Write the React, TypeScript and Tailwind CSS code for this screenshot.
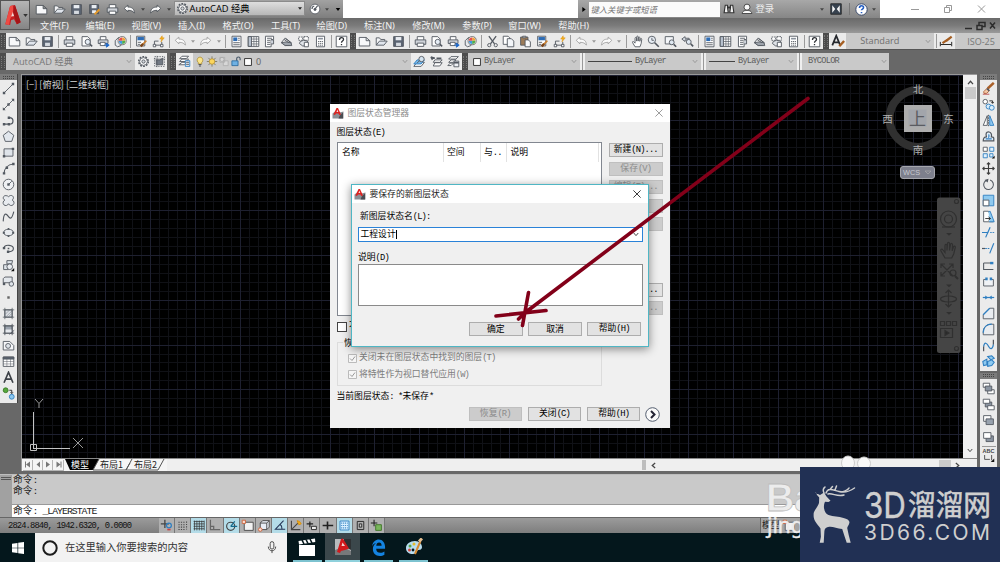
import React from "react";

const D = "#525860";
const B = "#2f7fc1";

const icons: Record<string, React.ReactNode> = {
  new: <path d="M1.500 3h8.500l4.500 4v6.500h-13z M10 3v4h4.500" fill="#f7f8fa" />,
  open: <><path d="M1.500 12.500v-9h4l1.500 2h5v2" fill="#f3f4f6" /><path d="M1.500 12.500l4-5h9.500l-4 5z" fill="#e0e5ec" /></>,
  save: <><path d="M2 2h12v12H2z" fill="#5b6472" /><path d="M4.500 2.500h7v4h-7z" fill="#e9edf2" stroke="none" /><path d="M5 9.500h6v4H5z" fill="#d5dae0" stroke="none" /></>,
  saveas: <><path d="M2 2h11v11H2z" fill="#5b6472" /><path d="M4.500 2.500h6v4h-6z M5 9h5v3.500H5z" fill="#e9edf2" stroke="none" /><path d="M8 14l6-6" stroke="#e39a2e" strokeWidth="2.600" /></>,
  print: <><path d="M4 6V2h8v4" fill="#fff" /><path d="M1.500 6h13v5.500h-13z" fill="#cfd3d9" /><path d="M4 10h8v4H4z" fill="#fff" /></>,
  preview: <><path d="M2.500 2h7l3 3v8.500h-10z" fill="#fff" /><circle cx="9.500" cy="8.500" r="3.200" fill="#e6edf5" /><path d="M12 11l3 3" strokeWidth="1.800" /></>,
  publish: <><path d="M4 6V2h7v4" fill="#fff" /><path d="M1.500 6h12v4.500h-12z" fill="#cfd3d9" /><path d="M4 9h6v4H4z" fill="#fff" /><path d="M9 12.500h3M11.500 10l3.500 2.500-3.500 2.500z" fill="#1b66c9" stroke="#1b66c9" /></>,
  dwf: <><path d="M1.500 7l4-4 3 3v7l-4 1.500-3-2z" fill="#e8ebef" /><circle cx="10" cy="7" r="5" fill="#fff" stroke="#666" /><path d="M10 7V3a4 4 0 0 1 4 4z" fill="#f2a33a" stroke="none" /><path d="M10 7h4a4 4 0 0 1-4 4z" fill="#4fae4b" stroke="none" /><path d="M10 7v4a4 4 0 0 1-4-4z" fill="#3f9ae0" stroke="none" /><path d="M10 7H6a4 4 0 0 1 4-4z" fill="#e35050" stroke="none" /></>,
  match: <><path d="M2 1.500h10v12H2z" fill="#fff" /><path d="M3 2.500h8v4H3z" fill="#2d6cb5" stroke="none" /><path d="M3.500 9h4M3.500 11.500h3" /><path d="M8 13l6-6" stroke="#c98032" strokeWidth="2" /><path d="M7 14l3-3" stroke="#7b4518" strokeWidth="3" /></>,
  bolt: <><path d="M3 7.500v5h9v-4M3 7.500h5" /><path d="M1.500 11.500h3v3h-3z M10.500 11.500h3v3h-3z" fill="#fff" /><path d="M12.500 1L9.500 5h2.500l-1 3.500 4-5h-2.500z" fill="#f6b21b" stroke="#d98e0a" strokeWidth=".6" /></>,
  undo: <path d="M1.500 6.500L6 2.500v2.500c5 0 8 2 8 7.500-1.500-2.500-4-3.500-8-3.500v2z" fill="#fafafa" />,
  redo: <path d="M14.500 6.500L10 2.500v2.500c-5 0-8 2-8 7.500 1.500-2.500 4-3.500 8-3.500v2z" fill="#fafafa" />,
  props: <><path d="M2.500 1.500h11v13h-11z" fill="#fff" /><path d="M4 3h5v4.500H4z" fill="#2d6cb5" stroke="none" /><path d="M10 4h2M10 6.500h2M4 9.500h8M4 12h8" /></>,
  design: <><path d="M1.500 2h13v12h-13z" fill="#fff" /><path d="M1.500 2h4v12h-4z" fill="#b9c3d0" /><path d="M5.500 5h9M5.500 8h9M5.500 11h9M8.500 2v12M11.500 2v12" strokeWidth=".8" /></>,
  palette: <><path d="M3 1.500h10v4H10v9H3z" fill="#fff" /><path d="M5 4h6M5 6.500h4M5 9h4M5 11.500h4" /><path d="M10 6h3v5h-3" fill="#cfd5dd" /></>,
  sheet: <><path d="M2 9l4-5 8 5.500-2 3-6 .5z" fill="#f4f4f4" /><path d="M1.500 9.500l5 3.500h8l-1-3.500-6-1z" fill="#9ea4ac" /><path d="M5 5.500l6 4M7 4l6 5" /></>,
  markup: <><path d="M2 2.500h5v4H2zM8.500 2h5.500v4.500H8.500z" strokeDasharray="2 1" fill="#fff" /><path d="M4 8l4-1.500 5 1v6H7l-4-3z" fill="#dfe3e8" /><path d="M9 9h5v5.500H9z" fill="#fff" /></>,
  calc: <><path d="M3 1.500h10v13H3z" fill="#fff" /><path d="M5 3.500h6v2H5z" fill="#8a929c" stroke="none" /><path d="M5 8h6M5 10.300h6M5 12.500h6" strokeDasharray="1.500 .8" /></>,
  help: <><path d="M1.500 1.500h13v13h-13z" fill="#fff" /><path d="M5.500 6c0-3.500 5-3.500 5-.5 0 2-2.500 2-2.500 4M8 11v1.500" stroke="#2d3035" strokeWidth="1.600" /></>,
  cut: <><path d="M3.500 1.500l7 9.500M12.500 1.500l-7 9.500" strokeWidth="1.600" /><circle cx="4" cy="12.500" r="2" fill="none" /><circle cx="12" cy="12.500" r="2" fill="none" /></>,
  copy: <><path d="M1.500 1.500h6l2 2v8h-8z" fill="#fff" /><path d="M6.500 4.500h5l3 3v7h-8z" fill="#f3f5f8" /></>,
  paste: <><path d="M2 2.500h9v10H2z" fill="#9c7b58" /><path d="M4.500 1.500h4v2h-4z" fill="#ddd" /><path d="M7.500 6h4l2.500 2.500v6H7.500z" fill="#f8f9fb" /></>,
  pan: <path d="M5 14.500L2 9.500c-.8-1.500.7-2 1.500-1L5 10V4c0-1.300 1.600-1.300 1.800 0L7 7.500V2.300c0-1.300 1.800-1.300 1.800 0v5.200l.3-4.200c.2-1.300 1.800-1.100 1.800.2v4.300l.6-2.800c.3-1.200 1.800-1 1.700.3l-.7 5.200-1.500 4z" fill="#fff" />,
  zoomrt: <><circle cx="6" cy="6" r="4.500" fill="#e8eef5" /><path d="M6 3.500v3h2.500" /><path d="M9.500 9.500l5 5" strokeWidth="2" /></>,
  zoomwin: <><path d="M1.500 2h10v9h-10z" fill="#f4f6f9" /><circle cx="9.500" cy="9" r="3" fill="#dfe8f1" /><path d="M12 11.500l3 3" strokeWidth="2" /></>,
  zoomprev: <><path d="M1 5l4-3v2h5v2H5v2z" fill="#dde3ea" /><circle cx="9.500" cy="8.500" r="3" fill="#dfe8f1" /><path d="M12 11l3 3" strokeWidth="2" /></>,
  gear: <><circle cx="8" cy="8" r="5.800" fill="#fafafa" strokeWidth="2" strokeDasharray="2.200 1.400" /><circle cx="8" cy="8" r="4.800" fill="#fafafa" /><circle cx="8" cy="8" r="2" fill="#d5d8dc" /></>,
  wsave: <><path d="M2 2h12v12H2z" strokeDasharray="1.500 1.500" fill="none" /><path d="M4 6h4l4-2v8H4z" fill="#737a84" /><path d="M1 5h14M5 1v14" strokeWidth=".7" /></>,
  layers: <><path d="M5 1.500h8l-3 3H2z M5 5h8l-3 3H2z M5 9h6l-3 3H1z" fill="#fff" /><path d="M9 7h5.500v7H9z" fill="#e3e9f0" stroke={B} /><path d="M10 9h3.500M10 11.500h3.500" /></>,
  layerA: <><path d="M5 9h9l-4 5H1z" fill="#fff" /><path d="M5 6h9l-4 5H1z" fill="#7ab8e8" stroke={B} /><circle cx="10.500" cy="5" r="3.300" fill="#d5e4f0" /><path d="M8 7l-3 3" /></>,
  layerB: <><path d="M6 6h9l-3 3H4z M6 9.500h9l-3 4H4z" fill="#fff" /><path d="M1 2.500l5 1.500M1 2.500L3 6M8 4h6" strokeWidth="1.700" /></>,
  layerC: <><path d="M5 2h9l-3 3H2z M5 6h6l-3 3H2z M4 10h4l-3 3H1z" fill="#fff" /><path d="M8.500 7.500h6v7h-6z" fill="#eef1f5" /><path d="M8.500 9.500h6" strokeWidth="2" /></>,
  bulb: <><path d="M8 1.500a4.500 4.500 0 0 0-2.500 8v2h5v-2a4.500 4.500 0 0 0-2.500-8z" fill="#fbe58a" stroke="#a98c35" /><path d="M6 12.500h4M6.500 14.500h3" stroke="#555" strokeWidth="1.500" /></>,
  sun: <><path d="M8 .5v15M.5 8h15M2.700 2.700l10.600 10.600M13.300 2.700L2.700 13.300" stroke="#6d6a55" /><circle cx="8" cy="8" r="4" fill="#fbd65d" stroke="#b58d2a" /></>,
  freeze: <><path d="M2 2h7v7H2zM7 7h7v7H7z" fill="#d7d7d7" stroke="#aaa" /><circle cx="5" cy="5" r="3" fill="none" stroke="#aaa" /></>,
  lock: <><path d="M9 7V4c0-3.500 5-3.500 5 0v2" fill="none" strokeWidth="1.600" stroke="#456" /><path d="M2 7h9v7H2z" fill="#6fb1e3" stroke="#1f5f95" /></>,
  sq: <path d="M2.500 2.500h11v11h-11z" fill="#fff" stroke="#222" strokeWidth="1.400" />,
  astyle: <><path d="M1.500 13L6 2l4.500 11M3 9.500h6" strokeWidth="2" stroke="#25282d" fill="none" /><path d="M9.500 14l5.500-6" stroke="#a55e22" strokeWidth="2.800" /></>,
  dim: <><path d="M1.500 9v5M14.500 9v5M2 12h12" stroke="#222" fill="none" /><path d="M4 10.500l5-3.500M8 8l6.500-5" stroke="#a55e22" strokeWidth="2.600" /></>,
  line: <><path d="M2.500 13.500l11-11" /><path d="M1 12h3v3H1z M12 1h3v3h-3z" fill={D} stroke="none" /></>,
  xline: <><path d="M1.500 14.500l13-13" /><path d="M1 11.500V15h3.500zM15 4.500V1h-3.500z M6.500 6.500h3v3h-3z" fill={D} stroke="none" /></>,
  pline: <><path d="M2 12.500h7c6 0 6-8 0-8H8" fill="none" strokeWidth="1.500" /><path d="M1 11h3v3H1zM7 3h3v3H7zM7 11h3v3H7z" fill={D} stroke="none" /></>,
  polygon: <path d="M8 1.500l6.500 5L12 14H4L1.500 6.500z" fill="#e2e7ed" />,
  rect: <><path d="M2.500 3.500h11v9h-11z" fill="#dfe4ea" /><path d="M1 11h3v3H1zM12 2h3v3h-3z" fill={D} stroke="none" /></>,
  arc: <><path d="M2.500 14C3 8 7 3 14 2.500" fill="none" strokeWidth="1.400" /><path d="M1 12.500h3v3H1zM12.500 1h3v3h-3zM4.500 5.500h3v3h-3z" fill={D} stroke="none" /></>,
  circle: <><circle cx="8" cy="8" r="6.500" fill="#eef0f3" /><path d="M8 8l4-4" /><path d="M6.500 6.500h3v3h-3z" fill={D} stroke="none" /></>,
  cloud: <path d="M3.500 7.500C0 6 1.500 1.500 5 2c1.500 0 2.500.7 3 1.500C9.500 1 13.500 1.300 14 4c.3 1.800-.6 2.800-1.500 3.500 2.500 1 3 4 1.200 5.800-1.800 1.600-4.600 1-5.700-1.300-1 2.300-4 3-5.700 1.300-1.700-2-1-4.800 1.200-5.800z" fill="#e8ebef" />,
  spline: <path d="M1.500 14C2 3 5 4 7.500 7.500S12 12 14.500 2" fill="none" strokeWidth="1.400" />,
  ellipse: <><ellipse cx="8" cy="8" rx="6" ry="4" fill="#e8ebef" /><path d="M1 7h2.500v2.500H1zM12.500 7H15v2.500h-2.500zM7 2.500h2v2H7zM7 11.500h2v2H7z" fill={D} stroke="none" /></>,
  earc: <><path d="M2.500 7c1-4.500 11.500-3.500 11.500 1 0 3-3 4-6 4" fill="none" strokeWidth="1.400" /><path d="M1 6h3v3H1zM6 10.500h3v3H6zM7 7h2v2H7z" fill={D} stroke="none" /></>,
  insert: <><path d="M6 2h7l-1 4H6zM2 7h6v6H2z" fill="#dfe4ea" /><circle cx="9.500" cy="9.500" r="3.500" fill="#e9ecf0" /><path d="M11 15h4v-4z" fill="#111" stroke="none" /></>,
  block: <><path d="M1.500 4.500l2-2h9v7h-9l-2 0z" fill="#e3e7ec" /><circle cx="11.500" cy="11" r="2.800" fill="#dfe4ea" /><path d="M1 9.500h3v3H1z" fill={D} stroke="none" /></>,
  point: <path d="M6.500 6.500h3v3h-3z" fill="#666" stroke="none" />,
  hatch: <><path d="M3.500 3.500h9v9h-9z" fill="#dcdfe4" /><path d="M1 3.500h14M1 12.500h14M3.500 1v14M12.500 1v14" strokeWidth=".9" /><path d="M4 9l5-5M5 12l7-7M8 12l4-4" strokeWidth=".5" /></>,
  gradient: <><path d="M3.500 3.500h9v9h-9z" fill="#9ba3ae" /><path d="M4 8h8v4H4z" fill="#e6e9ed" stroke="none" /><path d="M1 3.500h14M1 12.500h14M3.500 1v14M12.500 1v14" /><path d="M9 14l6-5" /></>,
  region: <><path d="M1.500 3h8l5 5v5.500h-13z" fill="#f5f6f8" /><circle cx="7.500" cy="8.500" r="3" fill="#dfe4ea" /></>,
  table: <><path d="M1.500 2.500h13v11.500h-13z" fill="#fff" /><path d="M1.500 2.500h13v2.500h-13z" fill="#5b6472" /><path d="M1.500 8h13M1.500 11h13M6 5v9M10.500 5v9" strokeWidth=".6" /></>,
  text: <path d="M2.500 14.500L8 1.500l5.500 13M4.500 10h7" fill="none" stroke="#3d4147" strokeWidth="2" />,
  addsel: <><circle cx="4.500" cy="4" r="3" fill="#57a83c" stroke="#3a7a26" /><circle cx="12" cy="12" r="3" fill="#8cc8f0" stroke={B} /><path d="M9 4h3v4M10.500 6.500L12 8l1.500-1.500" stroke="#222" fill="none" /></>,
  erase: <><path d="M7 8l7.500-7" stroke="#a95f28" strokeWidth="3" /><path d="M2 12l4-4 3 3-3.500 3h-3z" fill="#f3c8a8" stroke="#b0643a" /><path d="M6 8l3 3" strokeWidth="2" /><path d="M1 15h8" stroke="#b44" /></>,
  copy2: <><circle cx="4" cy="4.500" r="2.800" fill="#fff" /><circle cx="8" cy="10.500" r="3" fill="#d8ecfa" stroke={B} /><circle cx="12" cy="12" r="3" fill="#d8ecfa" stroke={B} /><path d="M9 3.500h4v3M11.500 5L13 6.500 14.500 5" fill="none" stroke="#222" /></>,
  mirror: <><path d="M6.500 2v12h-5z" fill="#fff" /><path d="M9.500 2v12h5z" fill="#8fc8f0" stroke={B} /><path d="M8 1v14" strokeDasharray="2 1" /></>,
  offset: <><path d="M1.500 13.500h13v-3c0-1.500-1-2-3-2 1.500-7-6.500-8-6.500-3 0 1.500.5 2 .5 3-3 0-4 1.500-4 5z" fill="#e4eff8" strokeWidth="1.500" /><path d="M4.500 11h7.500M8 9.500c1-1.500.5-4 0-4" fill="none" stroke={B} strokeWidth="1.500" /></>,
  array: <><path d="M1.500 1.500h5v5h-5z" fill="#fff" /><path d="M9.500 1.500h5v5h-5zM1.500 9.500h5v5h-5zM9.500 9.500h4v4h-4z" fill="#e2f1fc" stroke={B} /><path d="M12 15.500h3.500V12z" fill="#111" stroke="none" /></>,
  move: <path d="M8 1v14M1 8h14M6 3l2-2 2 2M6 13l2 2 2-2M3 6L1 8l2 2M13 6l2 2-2 2" stroke="#3d3d3d" strokeWidth="1.400" fill="none" />,
  rotate: <><path d="M5 3a6 6 0 1 0 5-.5" fill="none" strokeWidth="1.300" /><path d="M3 2.500l5-1.500-1 4.500z" fill={D} stroke="none" /></>,
  scale: <><path d="M1.500 1.500h13v13h-13z" fill="#8fcaf0" stroke={B} /><path d="M1.500 7.500h7v7h-7z" fill="#fff" /></>,
  stretch: <><path d="M2 1.500h6l6 13H2z" fill="#fff" /><path d="M8 2l2-.5 5 13h-6" fill="#8fcaf0" stroke={B} /><path d="M4 10.500h6M8 8.500l2.500 2L8 12.500" stroke="#222" /></>,
  trim: <><path d="M0 8h8M10 1.500L4.500 14" stroke={B} strokeWidth="1.500" /><path d="M10 8h6" strokeDasharray="2 1" stroke={B} /></>,
  extend: <><path d="M0 8h4" strokeWidth="1.500" /><path d="M4 8h6" stroke={B} strokeDasharray="2 1" strokeWidth="1.500" /><path d="M14.500 1.500L9.500 14" stroke={B} strokeWidth="1.400" /></>,
  breakpt: <><path d="M2 5v8h12M2 5h11" fill="none" strokeWidth="1.300" /><path d="M10 3.500h4v3h-4z" fill={B} stroke="none" /></>,
  break: <><path d="M2 5.500v8h12v-8M2 5.500h3M11 5.500h3" fill="#f0f2f5" /><path d="M4 3h3v3.500H4zM9.500 3h3v3.500h-3z" fill={B} stroke="none" /></>,
  join: <><path d="M1 8h14" stroke={B} strokeWidth="1.500" /><path d="M4 5.500L7.500 8 4 10.500zM12 5.500L8.500 8l3.500 2.500z" fill={B} stroke="none" /></>,
  chamfer: <><path d="M1.500 14.500h13v-13h-5l-8 8z" fill="#e9ecf0" /><path d="M1.500 9.500l8-8" stroke={B} strokeWidth="1.600" /></>,
  fillet: <><path d="M1.500 14.500h13v-13h-3c-6 0-10 4-10 10z" fill="#e9ecf0" /><path d="M1.500 12C1.500 5 6 1.500 12 1.500" fill="none" stroke={B} strokeWidth="1.600" /></>,
  blend: <><path d="M2 15V9M14 7V1" strokeWidth="1.500" /><path d="M2 9c1-6 4-4 6 0s5 4 6-2" fill="none" stroke={B} strokeWidth="1.500" /></>,
  explode: <path d="M1 8l5-3v7l-4 1zM7 2l5-1 3 3-4 2zM7 8l5-2 3 3-3 4-5 1z" fill="#8fcaf0" stroke={B} strokeWidth="1.300" />,
  front: <><path d="M1.500 1.500h8v5h-8zM7 9.500h8v5H7z" fill="#fff" /><path d="M4 5h8v6H4z" fill="#8b95a2" /></>,
  back: <><path d="M4 5h8v6H4z" fill="#8b95a2" /><path d="M1.500 1.500h8v5h-8zM7 9.500h8v5H7z" fill="#fff" /></>,
  above: <><path d="M2 2h9v7H2z" fill="#fff" /><path d="M5 6h9v7H5z" fill="#98a2ae" /></>,
  under: <><path d="M5 6h9v7H5z" fill="#8b95a2" /><path d="M2 2h9v7H2z" fill="#fff" /></>,
  snap: <><path d="M1 6h10M6 1v10" strokeWidth="1.600" /><circle cx="11" cy="8" r="3" fill="none" stroke={B} strokeWidth="1.500" /><path d="M9 13h4" stroke="#c44" strokeWidth="2" /></>,
  grid9: <path d="M3 4h8M3 7h8M3 10h8M3 13h8M13 3v10" strokeDasharray="1.500 1.500" strokeWidth="1.300" />,
  grid: <path d="M2 3h13M2 6h13M2 9h13M2 12h13M3 2v12M6 2v12M9 2v12M12 2v12M15 2v12" strokeWidth=".9" stroke="#333" />,
  ortho: <path d="M3 1v12h12M3 9h4v4" fill="none" strokeWidth="1.500" stroke="#666" />,
  polar: <><circle cx="7" cy="9" r="5" fill="none" strokeWidth="1.400" /><path d="M7 9h8M7 9l5-6" stroke="#146a8c" strokeWidth="1.500" /></>,
  osnap: <><path d="M4 4h11v10H4z" fill="#f2f2f2" /><path d="M1.500 1.500h4v4h-4z" fill="#f9ded2" stroke="#d0643c" /></>,
  osnap3: <><path d="M4 5l3-3h8v8l-3 3H4z" fill="#e7edf5" /><path d="M4 5h8v8M12 5l3-3" fill="none" /><circle cx="4" cy="13" r="2.200" fill="#f9ded2" stroke="#d0643c" /></>,
  track: <path d="M13 2L3 12.500h12M9 7c2 1 2 3 2 5" fill="none" stroke="#235" strokeWidth="1.300" />,
  ducs: <><path d="M3 2v11h11M3 13l8-8" fill="none" strokeWidth="1.400" /><path d="M10 2l3 1 2 3-3 1z" fill="#f6b21b" stroke="#d98e0a" /></>,
  dyn: <><path d="M2 6h8M6 3v7" stroke="#222" strokeWidth="1.500" /><path d="M8 9h6v4H8z" fill="#eee" stroke="#222" /></>,
  lwt: <path d="M2 8h13M8 3v10" stroke="#222" strokeWidth="2" />,
  tpy: <><path d="M2.500 2.500h11v11h-11z" fill="#d9efff" stroke={B} /><path d="M4 5h8M4 8h8M4 11h8" stroke={B} strokeDasharray="1.200 1.200" strokeWidth="1.500" /></>,
  qp: <><path d="M4 3h8v10H4z" fill="none" stroke="#222" /><path d="M6.500 6h3v4h-3z" fill="#ccc" stroke="#222" /></>,
  sc: <><path d="M1 5h8M5 1v8" stroke="#222" strokeWidth="1.300" /><path d="M7 7h7v7H7z" fill="#78b65b" stroke="#3d7424" /></>,
  pie: <><circle cx="8" cy="8" r="6.500" fill="#fff" /><path d="M8 8l3.500-4.500M4 8a4 4 0 0 1 3-4" strokeWidth="1.600" fill="none" /><circle cx="8" cy="8.500" r="1.500" fill={D} /></>,
  bino: <><path d="M3 3h3v3L7 13H1.500zM10 3h3l1.500 10H9l1-7z" fill="#f1f1f1" stroke="#333" strokeWidth="1.500" /><path d="M6 6h4" stroke="#333" strokeWidth="2.500" /></>,
  user: <><circle cx="8" cy="5.500" r="4" fill="#fafafa" stroke="#333" /><path d="M1.500 14c1-4 4-4 6.500-4s5.500 0 6.500 4z" fill="#fafafa" stroke="#333" /></>,
  exch: <><path d="M1 1h14v14H1z" fill="#37424f" stroke="#222" /><path d="M3 3l4 5-4 5zM13 3L9 8l4 5z" fill="#f5f5f5" stroke="none" /></>,
  qmark: <><circle cx="8" cy="8" r="7" fill="#fff" stroke="#2c3e63" /><path d="M5.500 6c0-3.500 5-3.500 5-.5 0 2-2.500 2-2.500 3.500M8 11v1.500" stroke="#245ec2" strokeWidth="2" fill="none" /></>,
};

const Icon = ({ n, c = "w-[13px] h-[13px]", s = D }: { n: string; c?: string; s?: string }) => (
  <svg viewBox="0 0 16 16" className={`shrink-0 ${c}`} stroke={s} strokeWidth="1.100" fill="none">
    {icons[n]}
  </svg>
);

const Mixed = ({ t, c = "" }: { t: string; c?: string }) => (
  <span className={`whitespace-pre leading-none font-['Noto_Sans_CJK_SC',sans-serif] ${c}`}>
    {(t.match(/[\x20-\x7f]+|[^\x20-\x7f]+/g) || []).map((p, i) =>
      /^[\x20-\x7f]/.test(p) ? (
        <span key={i} className="font-['Liberation_Mono',monospace] tracking-[-0.1em]">{p}</span>
      ) : (
        <span key={i}>{p}</span>
      )
    )}
  </span>
);

const Chev = ({ c = "text-[#9a9a9a]" }: { c?: string }) => (
  <svg viewBox="0 0 8 6" className={`w-[6px] h-[5px] shrink-0 ${c}`} fill="none" stroke="currentColor" strokeWidth="1.300">
    <path d="M1 1l3 3.500L7 1" />
  </svg>
);

const Tri = ({ c = "w-[5px] text-[#444]" }: { c?: string }) => (
  <svg viewBox="0 0 6 4" className={`h-[3px] shrink-0 ${c}`} fill="currentColor"><path d="M0 0h6L3 4z" /></svg>
);

const Grip = () => (
  <div className="flex h-full w-[6px] shrink-0 items-center justify-center gap-[2px] bg-[#4c4c4c]">
    <i className="h-3 border-l border-dotted border-[#777]" />
    <i className="h-3 border-l border-dotted border-[#777]" />
  </div>
);

const Strip = ({ items }: { items: string }) => (
  <>
    {items.split(" ").map((k, i) =>
      k === "|" ? (
        <div key={i} className="flex w-[4.9px] shrink-0 justify-center"><i className="h-[13px] w-px bg-[#9b9b9b]" /></div>
      ) : k === "v" ? (
        <div key={i} className="flex w-[8.800px] shrink-0 justify-center"><Tri c="w-[4px] text-[#999]" /></div>
      ) : (
        <div key={i} className="flex w-[16.800px] shrink-0 justify-center"><Icon n={k} s={k === "undo" || k === "redo" ? "#a3a3a3" : D} /></div>
      )
    )}
  </>
);

const menus: [string, string][] = [
  ["文件(F)", "w-[45.500px]"], ["编辑(E)", "w-[46px]"], ["视图(V)", "w-[46.500px]"], ["插入(I)", "w-[44.500px]"],
  ["格式(O)", "w-[48.500px]"], ["工具(T)", "w-[45.500px]"], ["绘图(D)", "w-[47.500px]"], ["标注(N)", "w-[48.300px]"],
  ["修改(M)", "w-[50px]"], ["参数(P)", "w-[46px]"], ["窗口(W)", "w-[50px]"], ["帮助(H)", "w-[50px]"],
];

const TitleBar = () => (
  <div className="flex h-[18px] shrink-0 items-start bg-[#8f8f8f]">
    <div className="flex h-[18px] w-[343px] items-center bg-gradient-to-b from-[#a2a2a2] to-[#7e7e7e] pl-[33px]">
      {["new", "open", "save", "saveas", "print", "undo"].map((k) => (
        <div key={k} className="flex w-[17.600px] justify-center"><Icon n={k} s="#4f545b" /></div>
      ))}
      <div className="flex w-2 justify-center"><Tri c="w-[4px] text-[#444]" /></div>
      <div className="flex w-[18px] justify-center"><Icon n="redo" s="#4f545b" /></div>
      <div className="flex w-[8px] justify-center"><Tri c="w-[4px] text-[#444]" /></div>
      <div className="mb-px ml-px flex h-[15px] w-[131px] shrink-0 items-center border border-[#8b8b8b] bg-gradient-to-b from-[#dedede] to-[#b7b7b7] pl-px pr-[2px]">
        <Icon n="gear" />
        <span className="ml-px flex-1 whitespace-nowrap font-['Open_Sans','Noto_Sans_CJK_SC',sans-serif] text-[9.300px] leading-none text-black">AutoCAD 经典</span>
        <Tri c="w-[4px] text-[#222]" />
      </div>
      <Icon n="pie" c="ml-[4px] h-[12px] w-[12px]" />
      <Tri c="ml-[4px] w-[4px] text-[#444]" />
      <Tri c="ml-[6px] w-[6px] text-black" />
    </div>
    <div className="h-[18px] w-[235px] bg-white" />
    <div className="flex h-[18px] w-[302px] items-center bg-gradient-to-b from-[#a8a8a8] to-[#868686]">
      <svg viewBox="0 0 4 6" className="ml-[4px] h-[5px] w-[4px]"><path d="M0 0l4 3-4 3z" /></svg>
      <div className="ml-[2.500px] flex h-[15px] w-[131px] items-center bg-[#fbfbfb] pl-[2px]">
        <span className="font-['Noto_Sans_CJK_SC',sans-serif] text-[8.300px] italic leading-none text-[#777]">键入关键字或短语</span>
      </div>
      <Icon n="bino" c="ml-[3px] h-[12px] w-[12px]" />
      <Icon n="user" c="ml-[6px] h-[12px] w-[12px]" />
      <span className="ml-[3px] font-['Noto_Sans_CJK_SC',sans-serif] text-[9.300px] leading-none text-[#ededed]">登录</span>
      <Tri c="ml-[46px] w-[4px] text-[#444]" />
      <Icon n="exch" c="ml-[6px] h-[12px] w-[12px]" />
      <i className="ml-[7px] h-3 w-px bg-[#777]" />
      <Icon n="qmark" c="ml-[5px] h-[13px] w-[13px]" />
      <Tri c="ml-[4px] w-[4px] text-[#444]" />
    </div>
    <div className="flex h-[18px] flex-1 items-center bg-white">
      <svg viewBox="0 0 120 16" className="h-[16px] w-[120px]" fill="none" stroke="#999">
        <path d="M31 8.500h8M64.500 6.500h5v5h-5zM66.500 6v-1.500h5v5H70M98 4.500l7 7M105 4.500l-7 7" />
      </svg>
    </div>
  </div>
);

const MenuBar = () => (
  <div className="flex h-[15px] shrink-0 items-center bg-gradient-to-b from-[#6a6a6a] via-[#7b7b7b] to-[#9a9a9a] pl-[40px]">
    {menus.map(([m, w]) => (
      <span key={m} className={`${w} shrink-0 whitespace-nowrap font-['Noto_Sans','Noto_Sans_CJK_SC',sans-serif] text-[9.200px] leading-none text-[#f2f2f2]`}>{m}</span>
    ))}
    <div className="flex-1" />
    <svg viewBox="0 0 36 12" className="h-[12px] w-[36px]" fill="none" stroke="#2c2c2c" strokeWidth="1.500">
      <path d="M1 8.500h7M13 5.500h5v4h-5zM15 5V2.500h6v4h-2.500M26 2.500l5 6M31 2.500l-5 6" />
    </svg>
  </div>
);

const ToolbarOne = () => (
  <div className="flex h-[17px] shrink-0 items-center border-b border-[#555] bg-[#ebebeb]">
    <Grip />
    <Strip items="new open save | print preview publish dwf | match bolt | undo v redo v | props design palette sheet markup calc | help" />
    <Grip />
    <Strip items="new open save | print preview publish dwf | cut copy paste match bolt | undo v redo v | pan zoomrt zoomwin zoomprev | props design palette sheet markup calc | help" />
    <Grip />
    <div className="flex w-[17px] shrink-0 justify-center"><Icon n="astyle" c="h-[14px] w-[14px]" /></div>
    <div className="flex h-full w-[88px] shrink-0 items-center justify-between bg-[#c9c9c9] pl-[14px] pr-[3px] font-['Open_Sans',sans-serif] text-[9.200px] leading-none text-[#6e6e6e]">
      Standard<Chev />
    </div>
    <div className="flex w-[21px] shrink-0 items-center justify-center gap-[2px]"><i className="h-[14px] w-px bg-[#999]" /><Icon n="dim" c="h-[14px] w-[14px]" /></div>
    <div className="flex h-full min-w-0 flex-1 items-center whitespace-nowrap bg-[#c9c9c9] pl-[12px] font-['Open_Sans',sans-serif] text-[9px] leading-none text-[#777]">ISO-25</div>
  </div>
);

const ByL = ({ t }: { t: string }) => (
  <span className="flex font-['Liberation_Mono',monospace] text-[8.600px] leading-none tracking-[-0.085em] text-[#5c5c5c]">{t}</span>
);

const Sep = () => <div className="flex h-full w-[5px] shrink-0 justify-center bg-[#efefef]"><i className="h-full w-px bg-[#999]" /></div>;

const ToolbarTwo = () => (
  <div className="flex h-[17px] w-[889px] shrink-0 items-center bg-[#c9c9c9]">
    <Grip />
    <div className="flex h-full w-[129px] items-center justify-between pl-[7px] pr-[3px]">
      <span className="font-['Open_Sans','Noto_Sans_CJK_SC',sans-serif] text-[9.300px] leading-none text-[#777]">AutoCAD 经典</span>
      <Chev />
    </div>
    <div className="flex h-full w-[32px] items-center justify-around bg-[#ececec]"><Icon n="gear" /><Icon n="wsave" /></div>
    <div className="h-full w-[3px] bg-[#666]" />
    <Grip />
    <div className="flex h-full w-[17px] items-center justify-center bg-[#ececec]"><Icon n="layers" /></div>
    <div className="flex h-full w-[218px] items-center pl-[1px] pr-[3px]">
      {["bulb", "sun", "freeze", "lock"].map((k) => <Icon key={k} n={k} c="h-[11px] w-[12px]" />)}
      <Icon n="sq" c="ml-px h-[10px] w-[10px]" />
      <span className="ml-[3px] flex-1 font-['Noto_Sans',sans-serif] text-[9px] leading-none text-[#666]">0</span>
      <Chev />
    </div>
    <div className="flex h-full w-[51px] items-center justify-around bg-[#ececec]"><Icon n="layerA" /><Icon n="layerB" /><Icon n="layerC" /></div>
    <Grip />
    <div className="flex h-full w-[112px] items-center pl-[4px] pr-[3px]">
      <Icon n="sq" c="h-[10px] w-[10px]" /><div className="flex-1 pl-[2px]"><ByL t="ByLayer" /></div><Chev />
    </div>
    <Sep />
    <div className="flex h-full w-[116px] items-center pl-[3px] pr-[3px]">
      <i className="mr-[3px] h-px w-[44px] bg-[#444]" /><div className="flex-1"><ByL t="ByLayer" /></div><Chev />
    </div>
    <Sep />
    <div className="flex h-full w-[91px] items-center pl-[3px] pr-[3px]">
      <i className="mr-[3px] h-px w-[26px] bg-[#444]" /><div className="flex-1"><ByL t="ByLayer" /></div><Chev />
    </div>
    <Sep />
    <div className="flex h-full flex-1 items-center justify-between pl-[6px] pr-[2px]"><ByL t="BYCOLOR" /><Chev /></div>
  </div>
);

const leftTools = "line xline pline polygon rect arc circle cloud spline ellipse earc insert block point hatch gradient region table text addsel".split(" ");
const rightTools = "erase copy2 mirror offset array move rotate scale stretch trim extend breakpt break join chamfer fillet blend explode".split(" ");

const VGrip = () => (
  <div className="flex h-[6px] w-full shrink-0 flex-col items-center justify-center gap-px bg-[#7b7b7b]">
    <i className="w-[11px] border-t border-dotted border-[#444]" />
    <i className="w-[11px] border-t border-dotted border-[#444]" />
  </div>
);

const VSlot = ({ n }: { n: string }) => (
  <div className="flex h-[16.100px] w-full shrink-0 items-center justify-center"><Icon n={n} /></div>
);

const X0 = 38.5, Y0 = 45.3, STEP = 44.85;
const GridLines = () => {
  const minor: React.ReactNode[] = [];
  const major: React.ReactNode[] = [];
  for (let i = -5; i < 105; i++) {
    const p = Math.round(X0 + (i * STEP) / 5);
    if (p < 0 || p >= 941) continue;
    (i % 5 === 0 ? major : minor).push(<rect key={"v" + i} x={p} y={0} width={1} height={384} />);
  }
  for (let i = -5; i < 40; i++) {
    const p = Math.round(Y0 + (i * STEP) / 5);
    if (p < 0 || p >= 384) continue;
    (i % 5 === 0 ? major : minor).push(<rect key={"h" + i} x={0} y={p} width={941} height={1} />);
  }
  return <><g fill="#101116">{minor}</g><g fill="#1e2030">{major}</g></>;
};

const Canvas = () => (
  <svg viewBox="22 75 941 383" className="block h-[383px] w-[941px] shrink-0 bg-black">
    <g transform="translate(22 75)" shapeRendering="crispEdges"><GridLines /></g>
    <g fill="none" stroke="#c4c4c4"><path d="M33.500 412v37M33 448.500h37M30.500 444.500h6v6h-6z" /><path d="M35 399l4 4.500 4-4.500M39 403.500v4.500M73 438l10 10M83 438l-10 10" stroke="#999" /></g>
    <circle cx="918" cy="118.500" r="28.500" fill="none" stroke="#303030" strokeWidth="8" />
    <rect x="904" y="105" width="28" height="27" fill="#adadad" />
    <rect x="908.500" y="109.500" width="18" height="17" fill="#a2a5ab" />
    <g fill="#b0b0b0" fontFamily="'Noto Sans CJK SC',sans-serif" fontSize="10.500" textAnchor="middle">
      <text x="918" y="92.500">北</text><text x="918" y="153.500">南</text><text x="887.500" y="123">西</text><text x="948.500" y="123">东</text>
      <text x="917.500" y="124.500" fontSize="17" fill="#5a5c62">上</text>
    </g>
    <rect x="900.500" y="166.500" width="34" height="12" rx="2.500" fill="#7d7f8c" stroke="#a6a7ad" />
    <text x="903" y="174.800" fontSize="7.300" fontFamily="'Liberation Sans',sans-serif" fill="#c8c9d0">WCS</text>
    <path d="M925 171h6l-3 3z" stroke="#aaa" fill="none" strokeWidth=".7" />
    <rect x="937" y="197.500" width="23.500" height="155.500" rx="2.500" fill="#454545" />
    <g fill="none" stroke="#303030" strokeWidth="1.200">
      <circle cx="956.500" cy="201.500" r="2" />
      <circle cx="948.500" cy="219" r="8" /><circle cx="948.500" cy="219" r="4" /><path d="M942 227h13" />
      <path d="M945 258l-4-7c-1-2 1-2.500 2-1l2 2.500v-7c0-1.500 2-1.500 2 0v5l.5-7c0-1.500 2-1.500 2 0v7l1-6c.3-1.500 2-1.300 2 .3l-.3 6 1.300-4c.5-1.300 2-.8 1.800.5l-1.600 6.700-2 4z" />
      <path d="M941 264l12 12M953 264l-12 12M941 268v-4h4M949 264h4v4M941 272v4h4" /><circle cx="953" cy="273" r="3" /><path d="M955 276l3 3" strokeWidth="2" />
      <path d="M948.500 290v17M945.500 293l3-3 3 3M945.500 304l3 3 3-3" /><ellipse cx="948.500" cy="299" rx="8" ry="3" />
      <path d="M940.500 321.500h4v4h-4zM946.500 321.500h4v4h-4zM952.500 321.500h4v4h-4zM940.500 328.500h12v9h-12z" /><path d="M945 330.500v5l4-2.500z" fill="#2a2a2a" />
      <circle cx="956.500" cy="348.500" r="2" /><path d="M947.500 233.500h3l-1.500 1.500zM947.500 285h3l-1.500 1.500zM947.500 312.500h3l-1.500 1.500z" />
    </g>
  </svg>
);

const TabRow = () => (
  <div className="flex h-[13px] items-center border-t border-[#888] bg-[#efefef]">
    <svg viewBox="0 0 145 12" className="h-[12px] w-[145px] shrink-0">
      <rect width="145" height="12" fill="#f5f5f5" />
      <path d="M10.500 1v10M20.500 1v10M30.500 1v10M41.500 1v10M1 11.500h41" stroke="#b5b5b5" />
      <path d="M8 2.500v6L4 5.500zM18 2.500v6L14.500 5.500zM24 2.500v6l4-3zM34.500 2.500v6l4-3zM3 2.500h1v6H3zM38.500 2.500h1v6h-1z" fill="#777" />
      <path d="M43 0h34l-6 11H48z" fill="#000" />
      <path d="M71 11l6-11M71 11h33l6-11M104 11l4-7M104 11h32l6-11" stroke="#555" fill="none" />
      <g fontFamily="'Noto Sans CJK SC',sans-serif" fontSize="9">
        <text x="49" y="9" fill="#fff">模型</text><text x="78" y="9" fill="#222">布局1</text><text x="112" y="9" fill="#222">布局2</text>
      </g>
    </svg>
    <div className="w-[475px]" />
    <i className="h-[10px] w-[4px] bg-[#bdbdbd]" />
    <svg viewBox="0 0 6 8" className="ml-[5px] h-[7px] w-[5px]" fill="none" stroke="#444" strokeWidth="1.500"><path d="M5 1L1.500 4 5 7" /></svg>
    <div className="flex-1" />
    <i className="h-[11px] w-[12px] bg-[#cbcbcb]" />
    <svg viewBox="0 0 6 8" className="ml-[4px] mr-[17px] h-[7px] w-[5px]" fill="none" stroke="#444" strokeWidth="1.500"><path d="M1 1l3.500 3L1 7" /></svg>
  </div>
);

const btn = "flex h-[14px] w-[53.500px] shrink-0 items-center justify-center border text-[8.800px]";
const Btn = ({ t, off }: { t: string; off?: boolean }) => (
  <div className={`${btn} ${off ? "border-[#bfbfbf] bg-[#cccccc] text-[#8b8b8b]" : "border-[#adadad] bg-[#e2e2e2] text-black"}`}>
    <Mixed t={t} />
  </div>
);

const ALogo = ({ c = "h-[11px] w-[12px]" }: { c?: string }) => (
  <svg viewBox="0 0 24 22" className={`shrink-0 ${c}`}>
    <path d="M1 11l5-4 5 3 12-3v14H1z" fill="#8d9096" />
    <path d="M13 21l3-7 6-5v12z" fill="#4a4d52" />
    <path d="M3 13L9 0h3l6 13-4 1-1-3H8l-2 3z" fill="#dd2320" />
    <path d="M9 8l2-5 1.500 5z" fill="#f6e2e0" />
  </svg>
);

const CloseX = ({ s }: { s: string }) => (
  <svg viewBox="0 0 10 10" className="h-[8px] w-[8px]" stroke={s} strokeWidth="1.200"><path d="M.5.5l9 9M9.500.5l-9 9" /></svg>
);

const Check = ({ t }: { t: string }) => (
  <div className="flex h-[16.300px] items-center gap-[2px] text-[8.800px] text-[#7d7d7d]">
    <svg viewBox="0 0 9 9" className="h-[9px] w-[9px]" fill="#f6f6f6" stroke="#bbb"><path d="M.5.5h8v8h-8z" /><path d="M2 4.500l2 2 3-4" fill="none" stroke="#999" /></svg>
    <Mixed t={t} />
  </div>
);

const ManagerDialog = () => (
  <div className="absolute left-[330px] top-[104px] flex h-[323.500px] w-[340px] flex-col bg-[#f0f0f0]">
    <div className="flex h-[18px] shrink-0 items-center bg-white pl-[2px] pr-[7px]">
      <ALogo /><Mixed t="图层状态管理器" c="ml-[3.500px] flex-1 text-[8.800px] text-[#8c8c8c]" /><CloseX s="#999" />
    </div>
    <div className="flex h-[20px] shrink-0 items-center pl-[6.500px] pt-px text-[8.800px]"><Mixed t="图层状态(E)" /></div>
    <div className="flex h-[174px] shrink-0 gap-[7.500px] pl-[7px]">
      <div className="h-full w-[264.500px] border border-[#828790] bg-white">
        <div className="flex h-[19px] items-center text-[8.800px]">
          <span className="flex h-full w-[106px] items-center border-r border-[#e2e2e2] pl-[4px]"><Mixed t="名称" /></span>
          <span className="flex h-full w-[36.500px] items-center border-r border-[#e2e2e2] pl-[3px]"><Mixed t="空间" /></span>
          <span className="flex h-full w-[26.500px] items-center border-r border-[#e2e2e2] pl-[3.500px]"><Mixed t="与.." /></span>
          <span className="flex h-full w-[92px] items-center border-r border-[#e2e2e2] pl-[3.500px]"><Mixed t="说明" /></span>
        </div>
      </div>
      <div className="flex flex-col gap-[4.600px] pt-[1px]">
        <Btn t="新建(N)..." /><Btn t="保存(V)" off /><Btn t="编辑(E)..." off /><Btn t="" off /><Btn t="" off />
        <div className="h-[42px]" />
        <Btn t="       ..." /><Btn t="       ..." off />
      </div>
    </div>
    <div className="flex h-[20px] shrink-0 items-center gap-[2px] pl-[7px] pt-px text-[8.800px]">
      <i className="h-[10px] w-[10px] border border-[#444] bg-white" /><Mixed t="不" />
    </div>
    <div className="ml-[7px] mt-[6px] h-[43.500px] w-[264.500px] shrink-0 border border-[#dcdcdc] pl-[10px]">
      <div className="-ml-[5px] -mt-[5.500px] flex h-[11.500px] w-[11px] items-center bg-[#f0f0f0] pl-px text-[8.800px] leading-none"><Mixed t="恢" /></div>
      <div className="mt-px"><Check t="关闭未在图层状态中找到的图层(T)" /><Check t="将特性作为视口替代应用(W)" /></div>
    </div>
    <div className="flex h-[21px] shrink-0 items-center pl-[6.500px] pt-px text-[8.800px]"><Mixed t="当前图层状态: *未保存*" /></div>
    <div className="flex items-center gap-[5.700px] pl-[138.500px]">
      <Btn t="恢复(R)" off /><Btn t="关闭(C)" /><Btn t="帮助(H)" />
      <svg viewBox="0 0 15 15" className="-ml-px h-[15px] w-[15px]" fill="#fafafa" stroke="#555f70"><circle cx="7.500" cy="7.500" r="6.800" /><path d="M6 4l3.500 3.500L6 11" fill="none" stroke="#223" strokeWidth="2" /></svg>
    </div>
  </div>
);

const SaveDialog = () => (
  <div className="absolute left-[351px] top-[184px] flex h-[163px] w-[298px] flex-col border border-[#4fb6c4] bg-[#f0f0f0] shadow-[0_2px_9px_rgba(0,0,0,0.45)]">
    <div className="flex h-[18px] shrink-0 items-center bg-white pl-[2px] pr-[7px]">
      <ALogo /><Mixed t="要保存的新图层状态" c="ml-[3.500px] flex-1 text-[8.800px] text-[#222]" /><CloseX s="#333" />
    </div>
    <div className="flex h-[24px] shrink-0 items-center pl-[8px] pt-[3px] text-[8.800px]"><Mixed t="新图层状态名(L):" /></div>
    <div className="ml-[6px] flex h-[15px] w-[285px] shrink-0 items-center justify-between border border-[#2a82d8] bg-white pl-[1.500px] pr-[3px] text-[8.800px]">
      <span className="flex items-center"><Mixed t="工程设计" /><i className="h-[9px] w-px bg-black" /></span>
      <Chev c="text-[#444]" />
    </div>
    <div className="flex h-[22px] shrink-0 items-center pl-[6px] pt-[9px] text-[8.800px]"><Mixed t="说明(D)" /></div>
    <div className="ml-[6px] h-[42px] w-[285px] shrink-0 border border-[#8a8a8a] bg-white" />
    <div className="flex gap-[5.700px] pl-[117px] pt-[16px]"><Btn t="确定" /><Btn t="取消" /><Btn t="帮助(H)" /></div>
  </div>
);

const Arrow = () => (
  <svg viewBox="490 90 325 240" className="absolute left-[490px] top-[90px] h-[240px] w-[325px]" stroke="#820019" strokeWidth="3.600" strokeLinecap="round" fill="none">
    <path d="M808 98.500L526 312L518.500 319M496 316L546 310.500M528.500 292.500L522.500 325.500" />
  </svg>
);

const CommandArea = () => (
  <div className="flex h-[43px] shrink-0 border-t border-[#bdbdbd]">
    <div className="w-[12px] shrink-0 bg-[#a1a1a1] pt-[2px]"><div className="mx-[1px] h-[3px] border-y border-[#555]" /></div>
    <div className="flex flex-1 flex-col text-[9.800px] text-[#222]">
      <div className="flex h-[29px] flex-col bg-[#c9c9c9] pl-[1px]">
        <Mixed t="命令:" c="h-[11px]" /><Mixed t="命令:" c="h-[11px]" />
      </div>
      <div className="flex flex-1 items-center border-t border-[#999] bg-white pl-[1px]"><Mixed t="命令: _LAYERSTATE" /></div>
    </div>
  </div>
);

const statusItems: [string, boolean][] = [
  ["snap", false], ["grid9", false], ["grid", true], ["ortho", false], ["polar", true], ["osnap", false], ["osnap3", false],
  ["track", true], ["ducs", false], ["dyn", false], ["lwt", false], ["tpy", true], ["qp", false], ["sc", false],
];

const StatusBar = () => (
  <div className="flex h-[16px] shrink-0 items-center border-t border-[#666] bg-gradient-to-b from-[#9b9b9b] to-[#7e7e7e]">
    <div className="flex w-[159px] shrink-0 pl-[8px] text-[8.800px] text-[#111]"><Mixed t="2824.8840, 1942.6320, 0.0000" /></div>
    {statusItems.map(([k, on]) => (
      <div key={k} className={`flex h-[15px] w-[16.150px] shrink-0 items-center justify-center border-r border-[#777] ${on ? "bg-[#b4dce8]" : "bg-[#b0b0b0]"}`}>
        <Icon n={k} c="h-[13px] w-[13px]" s="#454545" />
      </div>
    ))}
    <div className="flex-1" />
    <div className="flex h-full w-[240px] items-center gap-[2px] border-l border-[#666] bg-[#a5a5a5] pl-[1px] font-['Noto_Sans_CJK_SC',sans-serif] text-[8.800px] leading-none text-[#222]">模型<Icon n="osnap" /></div>
  </div>
);

const Taskbar = () => (
  <div className="flex h-[29px] shrink-0 items-stretch bg-[#04171c]">
    <div className="flex w-[35px] items-center justify-center">
      <svg viewBox="0 0 12 12" className="h-[12px] w-[12px]" fill="#fff"><path d="M0 1.700l5.500-.8v4.800H0zM6.200.8L12 0v5.700H6.200zM0 6.300h5.500v4.800L0 10.300zM6.200 6.300H12V12l-5.800-.8z" /></svg>
    </div>
    <div className="flex w-[252px] items-center bg-[#f2f2f2] pl-[7px] pr-[10px]">
      <svg viewBox="0 0 16 16" className="h-[16px] w-[16px]" fill="none" stroke="#1c1c1c" strokeWidth="2"><circle cx="8" cy="8" r="6.700" /></svg>
      <span className="ml-[7px] flex-1 font-['Noto_Sans_CJK_SC',sans-serif] text-[10.250px] leading-none text-[#333]">在这里输入你要搜索的内容</span>
      <svg viewBox="0 0 10 14" className="h-[13px] w-[10px]" fill="none" stroke="#444"><rect x="3" y=".7" width="4" height="8" rx="2" /><path d="M1 6c0 6 8 6 8 0M5 10.500V13" /></svg>
    </div>
    <div className="ml-[2px] flex w-[36px] flex-col items-center justify-end gap-[4px]">
      <svg viewBox="0 0 18 18" className="h-[18px] w-[18px]" fill="#fff"><path d="M1 7h16v11H1zM.5 3L17 .5l.3 3.500L1 6.500z" /><path d="M4 2l2 4M8 1.500l2 4M12 1l2 4" stroke="#04171c" strokeWidth="1.600" /></svg>
      <i className="h-[2px] w-[29px] bg-[#7dc3d0]" />
    </div>
    <div className="flex w-[35px] flex-col items-center justify-end gap-[4px] bg-[#3b474b]">
      <svg viewBox="0 0 18 18" className="h-[18px] w-[18px]">
        <path d="M1 1h16v16H1z" fill="#b9bbbd" /><path d="M10 1h7v11l-7-4z" fill="#2e3133" /><path d="M1 12l8-3 8 4v4H1z" fill="#77797b" />
        <path d="M3 14L7 1l2-.5 6 10-4 1.500-4 1-1 2z" fill="#d2191c" /><path d="M7.500 8l1-3.500L11 8z" fill="#f4d3d0" />
      </svg>
      <i className="h-[2px] w-[35px] bg-[#8fd1dc]" />
    </div>
    <div className="flex w-[36px] flex-col items-center justify-end gap-[4px]">
      <svg viewBox="0 0 16 16" className="h-[17px] w-[15px]" fill="#1483e0" preserveAspectRatio="none"><path d="M1 7C2 2.500 5 .5 8.300.5c4 0 6.700 3 6.700 7v1.700H5.500c.2 2.800 2 3.800 4.500 3.800 1.800 0 3-.5 4.300-1.200v3c-1.300.7-3 1.200-5 1.200-4.500 0-7.300-2.500-7.300-6.500 0-2.800 1.500-4.700 3.500-5.800C3 4.200 1.800 5.500 1 7zm4.600-.6h5.700c0-2-1-3-2.700-3S5.900 4.500 5.600 6.400z" /></svg>
      <i className="h-[2px] w-[29px] bg-[#7dc3d0]" />
    </div>
    <div className="flex w-[35px] flex-col items-center justify-end gap-[4px]">
      <svg viewBox="0 0 18 18" className="h-[18px] w-[18px]"><path d="M1 10c0-4 4-7 9-7 4 0 7 3 7 6s-3 3-4 3-1 4-5 4-7-2-7-6z" fill="#b8dcef" /><circle cx="5" cy="8" r="1.500" fill="#58a64a" /><circle cx="9" cy="6" r="1.500" fill="#e7bb2c" /><circle cx="4.500" cy="12" r="1.500" fill="#d8443a" /><circle cx="8" cy="12" r="1.400" fill="#04171c" /><path d="M10 16l5.500-13" stroke="#d8892f" strokeWidth="2" /><path d="M14 3.500l3-3" stroke="#e8c092" strokeWidth="3" /></svg>
      <i className="h-[2px] w-[29px] bg-[#7dc3d0]" />
    </div>
  </div>
);

const BackMark = () => (
  <svg viewBox="760 452 130 90" className="absolute left-[760px] top-[452px] h-[90px] w-[130px]">
    <ellipse cx="848" cy="463" rx="6.500" ry="7" fill="#f8f8f8" stroke="#ccc" />
    <ellipse cx="864" cy="463.500" rx="6.500" ry="6.500" fill="#f8f8f8" stroke="#ccc" />
    <g fill="#ececec" fontFamily="'Liberation Sans',sans-serif">
      <text x="766" y="511" fontSize="39" fontWeight="bold" stroke="#bdbdbd" strokeWidth=".8">Ba</text>
      <text x="767" y="533" fontSize="21" fontFamily="'Noto Sans',sans-serif" stroke="#ececec" strokeWidth=".4">jing</text>
    </g>
  </svg>
);

const Brand = () => (
  <div className="absolute left-[800px] top-[467px] h-[95px] w-[200px] bg-[#213054]">
    <svg viewBox="0 0 200 95" className="h-[95px] w-[200px]">
      <g fill="#cfcfcf">
        <path d="M15 25.500l5 2.500 4-2.500 2.500 4 4 4.200-2 1.300-3.500-.3c-1 2.500-1.200 4-1 6.300.5 3.500 2 6 4.500 7 5 1.500 10 1.500 15 3 3.500.7 5.500 2 6 4-.2 2.500-1.800 4-2.300 6l1.500 7 2 7.700h-4l-2-6-2.500-7.700c-5-.5-9-2.500-13-2.200-3 .3-4.500 1.700-4.800 4.200l-.7 11.700h-4l1.200-6-.4-8.200c-1.500-2.500-4-4.500-5.500-7.500-1.500-3-1.500-5-1.300-8 1-3.500 4-6 5.300-10l.2-5.500c-1.500-1.500-2.700-3-3.200-5z" />
        <g fill="none" stroke="#cfcfcf" strokeWidth="1.500" strokeLinecap="round">
          <path d="M24 26c-2-4 0-5 1-6M26 26c2-6 7-3 13-1.500s12-1 15.500-3.500M30 22.500l2.500-3M35 23l1.500-4M42 25c3-1 6-2 7-4M28 27c5-1 9 3 16 1" />
        </g>
        <g fontFamily="'Noto Sans CJK SC',sans-serif" stroke="#cfcfcf" strokeWidth=".6">
          <text x="108" y="49" fontSize="29" textLength="83" lengthAdjust="spacingAndGlyphs">溜溜网</text>
        </g>
        <g fontFamily="Inter,sans-serif" stroke="#cfcfcf" strokeWidth=".4">
          <text x="64" y="51" fontSize="36" textLength="42" lengthAdjust="spacingAndGlyphs">3D</text>
          <text x="64" y="73" fontSize="21" strokeWidth="0" textLength="126" lengthAdjust="spacing">3D66.COM</text>
        </g>
      </g>
    </svg>
  </div>
);

const AppButton = () => (
  <div className="absolute left-0 top-0 flex h-[30px] w-[30px] items-center gap-px border border-[#555] bg-gradient-to-b from-[#b5b5b5] to-[#858585] pl-[3px]">
    <svg viewBox="0 0 18 24" className="h-[23px] w-[18px]">
      <path d="M1 21L6 2l5-1 6 18-4 2-3-5-3 1-1 5z" fill="#c51f22" />
      <path d="M1 21L6 2l3-.5v8L6 16l-1 6z" fill="#ef4a43" />
      <path d="M7 13l2-5 2.500 4.500z" fill="#f2d8d5" />
      <path d="M11 1l6 18-4 2-4-12z" fill="#a51518" />
    </svg>
    <Tri c="w-[5px] text-[#333]" />
  </div>
);

const Overlays = () => (
  <>
    <span className="absolute left-[26px] top-[78px] whitespace-nowrap text-[9.200px] leading-[12px] text-[#d8d8d8]">[−] [俯视] [二维线框]</span>
    <ManagerDialog />
    <SaveDialog />
    <Arrow />
    <BackMark />
    <Brand />
  </>
);

export default function App() {
  return (
    <div className="relative flex h-[562px] w-[1000px] flex-col overflow-hidden bg-[#686868] font-['Noto_Sans_CJK_SC',sans-serif]">
      <TitleBar />
      <MenuBar />
      <ToolbarOne />
      <div className="h-[3px] shrink-0" />
      <ToolbarTwo />
      <div className="h-[4px] shrink-0" />
      <div className="flex h-[397px] shrink-0 items-start">
        <div className="flex w-[18px] shrink-0 flex-col border-r border-[#444] bg-[#ebebeb] pb-px">
          <VGrip />
          {leftTools.map((k) => <VSlot key={k} n={k} />)}
        </div>
        <div className="ml-[3px] flex w-[956px] shrink-0 flex-col border-l border-t border-[#999]">
          <div className="flex">
            <Canvas />
            <div className="flex flex-1 flex-col items-center bg-[#f0f0f0] py-[5px]">
              <svg viewBox="0 0 8 6" className="h-[5px] w-[7px]" fill="none" stroke="#444" strokeWidth="1.500"><path d="M1 5l3-3.500L7 5" /></svg>
              <i className="mt-[2px] h-[12px] w-[11px] bg-[#cacaca]" />
              <div className="flex-1" />
              <Chev c="text-[#444]" />
            </div>
          </div>
          <TabRow />
        </div>
        <div className="ml-[3px] flex h-full w-[17px] shrink-0 flex-col items-center overflow-hidden bg-[#ebebeb]">
          <VGrip />
          {rightTools.map((k) => <VSlot key={k} n={k} />)}
          <div className="mb-[2px] mt-px w-full border-t-2 border-[#666]"><VGrip /></div>
          {["front", "back", "above", "under"].map((k) => <VSlot key={k} n={k} />)}
          <i className="my-px h-px w-[14px] shrink-0 bg-[#999]" />
          <div className="flex h-[17px] shrink-0 flex-col items-center">
            <span className="font-['Liberation_Sans',sans-serif] text-[5.500px] font-bold leading-[7px] text-[#444]">ABC</span>
            <svg viewBox="0 0 12 8" className="h-[7px] w-[12px]" fill="none" stroke="#444"><path d="M1 0v5h6M9 0v6" /><path d="M8 8h4V4z" fill="#111" stroke="none" /></svg>
          </div>
          <VSlot n="above" />
        </div>
      </div>
      <div className="h-[3px] shrink-0" />
      <CommandArea />
      <StatusBar />
      <Taskbar />
      <AppButton />
      <Overlays />
    </div>
  );
}
